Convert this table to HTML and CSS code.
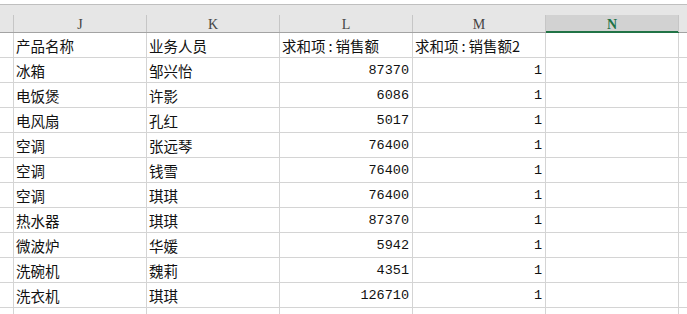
FILE: index.html
```html
<!DOCTYPE html>
<html lang="zh-CN">
<head>
<meta charset="utf-8">
<title>Sheet</title>
<link rel="stylesheet" href="styles.css">
</head>
<body>
<div class="sheet">
  <div class="colhead">
    <div class="hc corner"></div>
    <div class="hc">J</div>
    <div class="hc">K</div>
    <div class="hc">L</div>
    <div class="hc">M</div>
    <div class="hc sel">N</div>
    <div class="hc rest"></div>
  </div>
  <div class="row">
    <div class="c rh"></div>
    <div class="c t">产品名称</div>
    <div class="c t">业务人员</div>
    <div class="c t">求和项<span class="colon">:</span>销售额</div>
    <div class="c t">求和项<span class="colon">:</span>销售额2</div>
    <div class="c"></div>
    <div class="c rest"></div>
  </div>
  <div class="row">
    <div class="c rh"></div><div class="c t">冰箱</div><div class="c t">邹兴怡</div><div class="c n">87370</div><div class="c n">1</div><div class="c"></div><div class="c rest"></div>
  </div>
  <div class="row">
    <div class="c rh"></div><div class="c t">电饭煲</div><div class="c t">许影</div><div class="c n">6086</div><div class="c n">1</div><div class="c"></div><div class="c rest"></div>
  </div>
  <div class="row">
    <div class="c rh"></div><div class="c t">电风扇</div><div class="c t">孔红</div><div class="c n">5017</div><div class="c n">1</div><div class="c"></div><div class="c rest"></div>
  </div>
  <div class="row">
    <div class="c rh"></div><div class="c t">空调</div><div class="c t">张远琴</div><div class="c n">76400</div><div class="c n">1</div><div class="c"></div><div class="c rest"></div>
  </div>
  <div class="row">
    <div class="c rh"></div><div class="c t">空调</div><div class="c t">钱雪</div><div class="c n">76400</div><div class="c n">1</div><div class="c"></div><div class="c rest"></div>
  </div>
  <div class="row">
    <div class="c rh"></div><div class="c t">空调</div><div class="c t">琪琪</div><div class="c n">76400</div><div class="c n">1</div><div class="c"></div><div class="c rest"></div>
  </div>
  <div class="row">
    <div class="c rh"></div><div class="c t">热水器</div><div class="c t">琪琪</div><div class="c n">87370</div><div class="c n">1</div><div class="c"></div><div class="c rest"></div>
  </div>
  <div class="row">
    <div class="c rh"></div><div class="c t">微波炉</div><div class="c t">华媛</div><div class="c n">5942</div><div class="c n">1</div><div class="c"></div><div class="c rest"></div>
  </div>
  <div class="row">
    <div class="c rh"></div><div class="c t">洗碗机</div><div class="c t">魏莉</div><div class="c n">4351</div><div class="c n">1</div><div class="c"></div><div class="c rest"></div>
  </div>
  <div class="row">
    <div class="c rh"></div><div class="c t">洗衣机</div><div class="c t">琪琪</div><div class="c n">126710</div><div class="c n">1</div><div class="c"></div><div class="c rest"></div>
  </div>
  <div class="row">
    <div class="c rh"></div><div class="c"></div><div class="c"></div><div class="c"></div><div class="c"></div><div class="c"></div><div class="c rest"></div>
  </div>
</div>
</body>
</html>
```

FILE: styles.css
```css
html, body {
  margin: 0;
  padding: 0;
  background: #ffffff;
}

.sheet {
  width: 687px;
  height: 314px;
  overflow: hidden;
  font-family: "Noto Sans CJK SC", "Noto Sans", sans-serif;
}

.colhead {
  margin-top: 4px;
  border-top: 1px solid #bfbfbf;
  border-bottom: 1px solid #a3a3a3;
  background: #e6e6e6;
  padding-top: 10px;
  display: grid;
  grid-template-columns: 14px repeat(5, 133px) 1fr;
}

.hc {
  box-sizing: border-box;
  height: 17px;
  border-right: 1px solid #c6c6c6;
  font-family: "Liberation Serif", "DejaVu Serif", serif;
  font-size: 14px;
  line-height: 19px;
  color: #444444;
  text-align: center;
}

.hc.sel {
  background: #d2d2d2;
  color: #217346;
  font-weight: bold;
  box-shadow: inset 0 -1px 0 #217346, 0 1px 0 #217346;
}

.hc.rest {
  border-right: none;
}

.row {
  display: grid;
  grid-template-columns: 14px repeat(5, 133px) 1fr;
  height: 25px;
  box-sizing: border-box;
  border-bottom: 1px solid #d4d4d4;
}

.c {
  box-sizing: border-box;
  border-right: 1px solid #d4d4d4;
  height: 24px;
  white-space: nowrap;
  overflow: hidden;
}

.c.rest {
  border-right: none;
}

.t {
  font-size: 14.5px;
  line-height: 26px;
  padding-left: 2px;
  color: #111111;
}

.colon {
  padding: 0 3px;
}

.n {
  font-family: "Liberation Mono", "DejaVu Sans Mono", monospace;
  font-size: 13.5px;
  line-height: 26px;
  text-align: right;
  padding-right: 3px;
  color: #111111;
}
```
